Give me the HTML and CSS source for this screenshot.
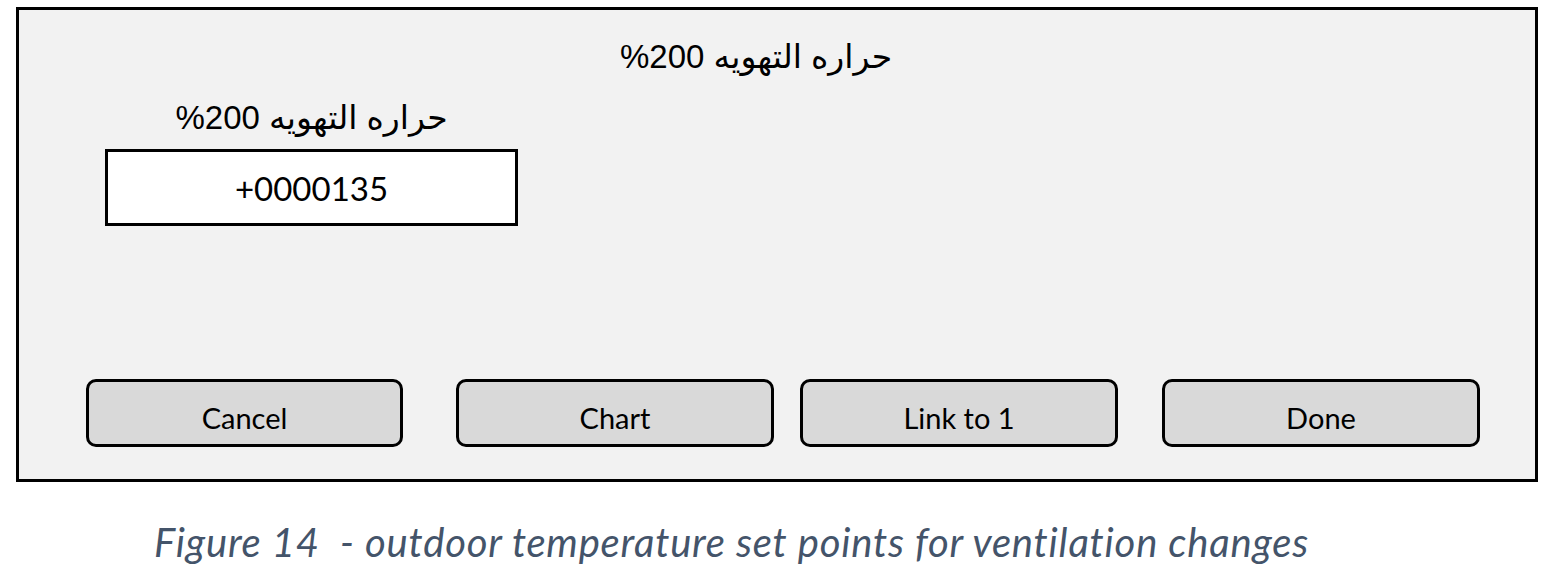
FILE: index.html
```html
<!DOCTYPE html>
<html lang="en">
<head>
<meta charset="utf-8">
<title>Figure 14</title>
<link rel="stylesheet" href="styles.css">
</head>
<body>
<div class="page">
  <section class="dialog">
    <h1 class="dialog-title" dir="rtl">حراره التهويه <bdi dir="ltr">%200</bdi></h1>
    <div class="field">
      <div class="field-label" dir="rtl">حراره التهويه <bdi dir="ltr">%200</bdi></div>
      <div class="field-input">+0000135</div>
    </div>
    <div class="actions">
      <button class="btn">Cancel</button>
      <button class="btn btn-chart">Chart</button>
      <button class="btn btn-link">Link to 1</button>
      <button class="btn btn-done">Done</button>
    </div>
  </section>
  <p class="caption">Figure 14&nbsp; - outdoor temperature set points for ventilation changes</p>
</div>
</body>
</html>
```
FILE: styles.css
```css
html, body {
  margin: 0;
  padding: 0;
  background: #ffffff;
}

.page {
  padding: 7px 0 0 16px;
}

.dialog {
  box-sizing: border-box;
  width: 1522px;
  height: 475px;
  border: 3px solid #000;
  background: #f2f2f2;
  display: flex;
  flex-direction: column;
  padding: 28px 55px 32px 67px;
}

.dialog-title,
.field-label {
  margin: 0;
  font-family: "Liberation Sans", "DejaVu Sans", sans-serif;
  font-size: 33px;
  font-weight: normal;
  line-height: 38px;
  color: #000;
  text-align: center;
}

.dialog-title {
  padding-right: 54px;
}

.field {
  margin: 23px 0 0 19px;
  width: 413px;
  display: flex;
  flex-direction: column;
}

.field-input {
  box-sizing: border-box;
  margin-top: 12px;
  height: 77px;
  border: 3px solid #000;
  background: #fff;
  display: flex;
  align-items: center;
  justify-content: center;
  font-family: Lato, "Liberation Sans", sans-serif;
  font-size: 33px;
  color: #000;
}

.actions {
  margin-top: auto;
  display: flex;
}

.btn {
  box-sizing: border-box;
  width: 318px;
  height: 68px;
  border: 3px solid #000;
  border-radius: 10px;
  background: #d9d9d9;
  padding: 18px 0 0;
  margin: 0;
  font-family: Lato, "Liberation Sans", sans-serif;
  font-size: 29px;
  line-height: 35px;
  color: #000;
  text-align: center;
  display: flex;
  justify-content: center;
  align-items: flex-start;
}

.btn:first-child {
  width: 317px;
}

.btn-chart {
  margin-left: 53px;
}

.btn-link {
  margin-left: 26px;
}

.btn-done {
  margin-left: 44px;
}

.caption {
  margin: 36px 0 0 138px;
  font-family: Lato, "Liberation Sans", sans-serif;
  font-style: italic;
  font-size: 40px;
  letter-spacing: 0.8px;
  color: #44546a;
  white-space: nowrap;
}
```
